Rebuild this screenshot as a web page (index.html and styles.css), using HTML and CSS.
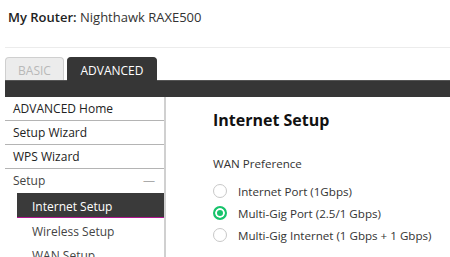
FILE: index.html
```html
<!DOCTYPE html>
<html lang="en">
<head>
  <meta charset="UTF-8">
  <title>Internet Setup</title>
  <link rel="stylesheet" href="styles.css">
</head>
<body>
  <div class="top">
    <span class="router-label">My Router:</span> Nighthawk RAXE500
  </div>

  <div class="tabs">
    <div class="tab">BASIC</div>
    <div class="tab active">ADVANCED</div>
  </div>
  <div class="tab-bar"></div>

  <div class="main">
    <nav class="sidebar">
      <div class="nav-item">ADVANCED Home</div>
      <div class="nav-item">Setup Wizard</div>
      <div class="nav-item">WPS Wizard</div>
      <div class="nav-item group">Setup <span class="collapse">&mdash;</span></div>
      <div class="sub-item selected">Internet Setup</div>
      <div class="sub-item">Wireless Setup</div>
      <div class="sub-item">WAN Setup</div>
    </nav>

    <section class="content">
      <h1>Internet Setup</h1>
      <div class="field-label">WAN Preference</div>
      <label class="radio"><span class="dot"></span>Internet Port (1Gbps)</label>
      <label class="radio"><span class="dot on"></span>Multi-Gig Port (2.5/1 Gbps)</label>
      <label class="radio"><span class="dot"></span>Multi-Gig Internet (1 Gbps + 1 Gbps)</label>
    </section>
  </div>
</body>
</html>
```

FILE: styles.css
```css
* {
  box-sizing: border-box;
}

body {
  margin: 0;
  font-family: 'Open Sans', 'Liberation Sans', sans-serif;
  color: #333;
  background: #fff;
  overflow: hidden;
}

.top {
  height: 48px;
  padding: 8px 0 0 3px;
  margin-left: 5px;
  font-size: 13px;
  border-bottom: 1px solid #ececec;
}

.router-label {
  font-weight: 600;
  color: #222;
}

.tabs {
  display: flex;
  gap: 3px;
  margin: 9px 0 0 5px;
  height: 23px;
  align-items: flex-end;
}

.tab {
  height: 23px;
  width: 59px;
  padding-top: 4px;
  text-align: center;
  font-size: 12px;
  color: #b8b8b8;
  background: #ececec;
  border: 1px solid #cfcfcf;
  border-bottom: none;
  border-radius: 4px 4px 0 0;
}

.tab.active {
  width: 90px;
  color: #fff;
  background: #363636;
  border-color: #363636;
}

.tab-bar {
  height: 17px;
  margin-left: 5px;
  background: #363636;
  border-top: 1px solid #555;
}

.tabs .tab.active {
  margin-bottom: -1px;
  height: 24px;
  position: relative;
  z-index: 1;
}

.main {
  display: flex;
  margin-left: 5px;
}

.sidebar {
  width: 161px;
  flex-shrink: 0;
  border-right: 2px solid #d0d0d0;
  font-size: 12px;
}

.nav-item {
  height: 24px;
  padding: 3px 0 0 8px;
  color: #222;
  border-bottom: 1px solid #b4b4b4;
  display: flex;
  justify-content: space-between;
}

.nav-item.group {
  border-bottom: none;
  color: #444;
}

.collapse {
  color: #aaa;
  margin-right: 9px;
}

.sub-item {
  height: 24px;
  margin-left: 12px;
  padding: 5px 0 0 15px;
  color: #444;
}

.sub-item.selected {
  height: 25px;
  background: #3a3a3a;
  color: #fff;
  border-bottom: 1px solid #b0178f;
}

.content {
  padding: 12px 0 0 47px;
}

.content h1 {
  margin: 0 0 25px;
  font-size: 16px;
  font-weight: 700;
  color: #111;
}

.field-label {
  font-size: 11.6px;
  margin-bottom: 9px;
}

.radio {
  display: flex;
  align-items: center;
  height: 22px;
  font-size: 11.6px;
  color: #333;
}

.dot {
  width: 14px;
  height: 14px;
  border: 1px solid #c8c8c8;
  border-radius: 50%;
  margin-right: 11px;
  flex-shrink: 0;
}

.dot.on {
  border: 2px solid #17c36b;
  background: #17c36b;
  box-shadow: inset 0 0 0 2px #fff;
}
```
